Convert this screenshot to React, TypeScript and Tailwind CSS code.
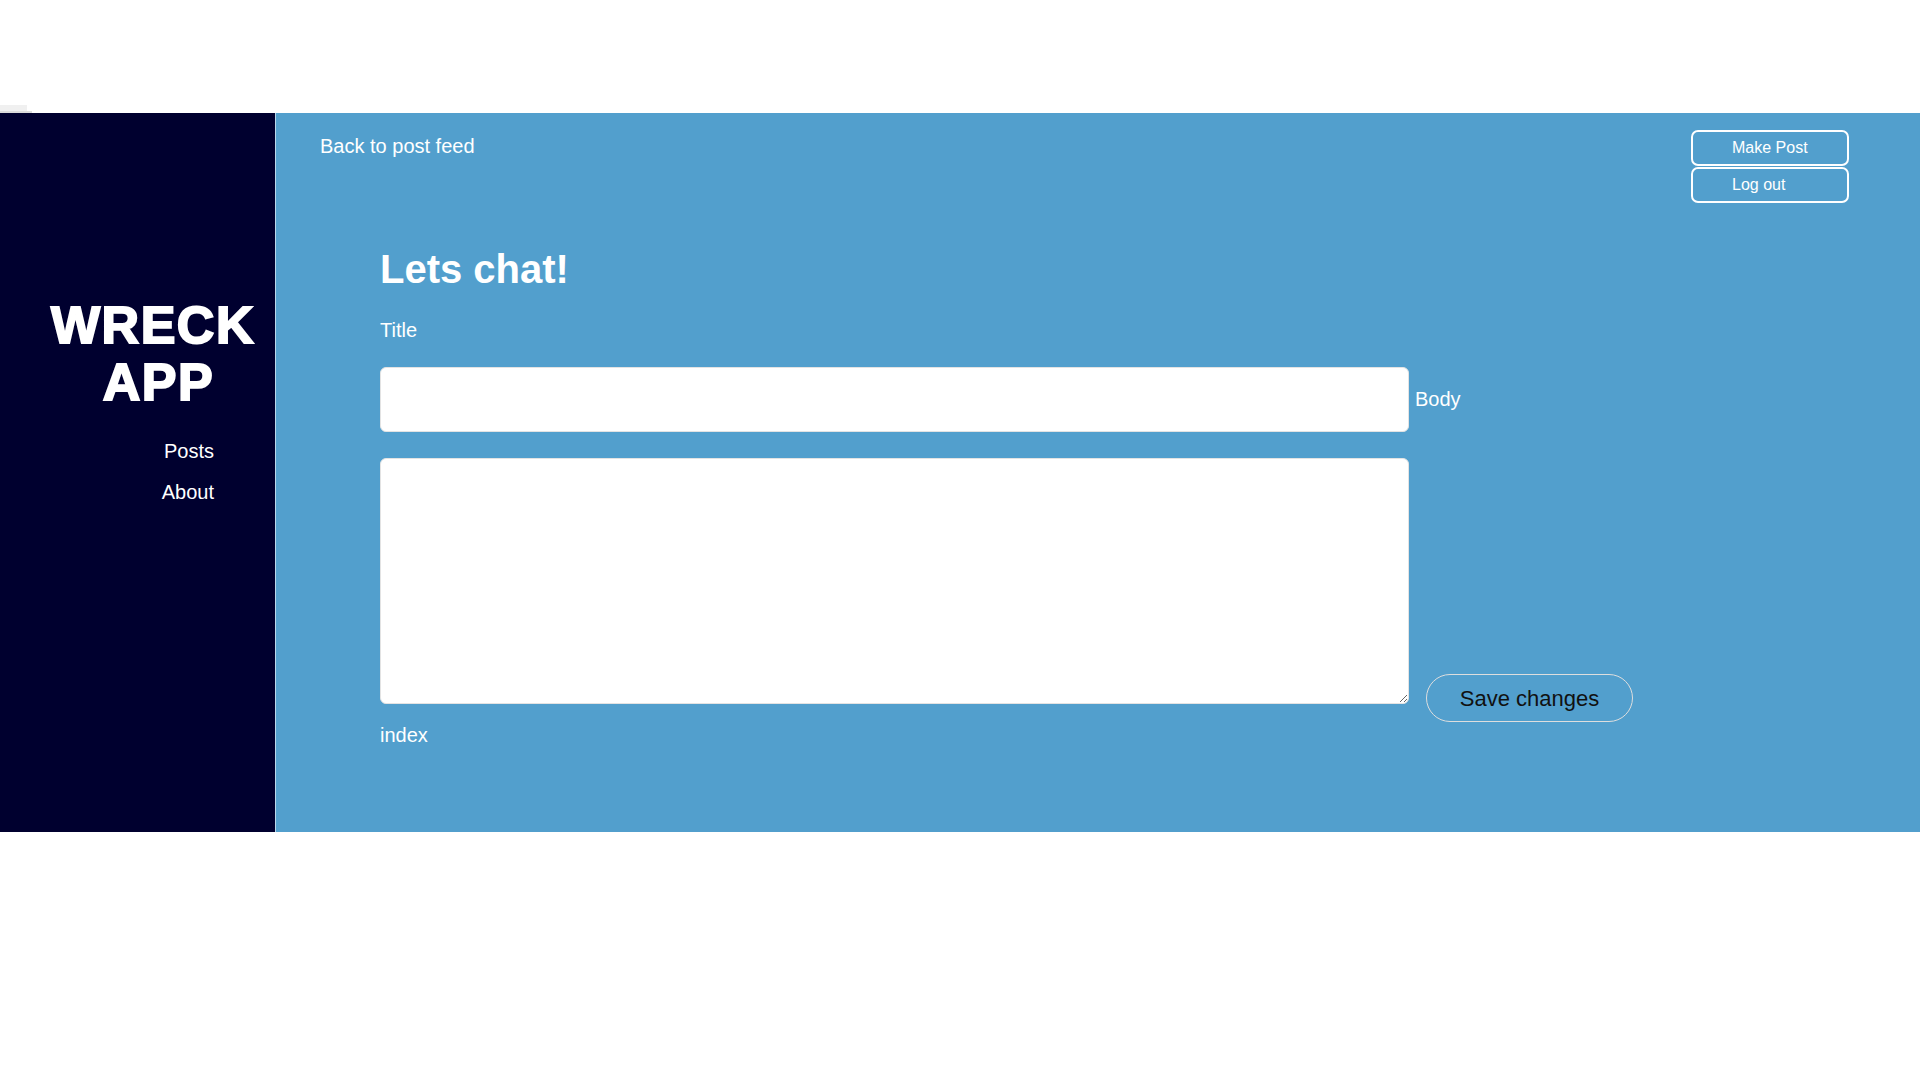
import React from 'react';

const sans = { fontFamily: '"Liberation Sans", Arial, sans-serif' };

function Sidebar() {
  return (
    <div className="w-[276px] shrink-0 bg-[#00002f] border-r border-[#b9d7ea] flex flex-col pt-[184px]">
      <h1 className="text-white font-bold text-[52px] leading-[57px] tracking-[1.5px] [-webkit-text-stroke:2px_white]">
        <span className="block w-[306px] text-center">WRECK</span>
        <span className="block w-[317px] text-center">APP</span>
      </h1>
      <nav className="mt-[29px] flex flex-col items-end gap-[18px] pr-[61px] text-white text-[20px] leading-[23px]">
        <a href="#">Posts</a>
        <a href="#">About</a>
      </nav>
    </div>
  );
}

export default function App() {
  return (
    <div className="bg-white min-h-[1080px]" style={sans}>
      <div className="h-[113px] flex flex-col justify-end">
        <div className="w-[27px] h-[6px] bg-[#f0f0f0]"></div>
        <div className="w-[32px] h-[2px] bg-[#dcdcdc]"></div>
      </div>
      <div className="flex h-[719px]">
        <Sidebar />
        <main className="flex-1 bg-[#529fcd] flex flex-col">
          <div className="flex justify-between pl-[44px] pr-[71px] pt-[17px]">
            <a href="#" className="mt-[5px] text-white text-[20px] leading-[23px]">Back to post feed</a>
            <div className="flex flex-col gap-[1px]">
              <button className="w-[158px] h-[36px] border-2 border-white rounded-[7px] text-white text-[16px] text-left pl-[39px]">
                Make Post
              </button>
              <button className="w-[158px] h-[36px] border-2 border-white rounded-[7px] text-white text-[16px] text-left pl-[39px]">
                Log out
              </button>
            </div>
          </div>

          <form className="pl-[104px] mt-[43px] flex flex-col">
            <h2 className="text-white font-bold text-[40px] leading-[46px]">Lets chat!</h2>
            <label className="mt-[27px] text-white text-[20px] leading-[23px]">Title</label>
            <div className="mt-[25px] flex items-center">
              <input type="text" className="w-[1029px] h-[65px] bg-white rounded-[6px] border border-[#e3e3e3]" />
              <label className="ml-[6px] text-white text-[20px] leading-[23px]">Body</label>
            </div>
            <div className="mt-[26px] flex items-start">
              <textarea className="w-[1029px] h-[246px] bg-white rounded-[6px] border border-[#e3e3e3]"></textarea>
              <button
                type="button"
                className="ml-[17px] mt-[216px] w-[207px] h-[48px] rounded-full border border-[#dedede] text-[#111] text-[22px]"
              >
                Save changes
              </button>
            </div>
            <p className="mt-[2px] text-white text-[20px] leading-[23px]">index</p>
          </form>
        </main>
      </div>
    </div>
  );
}
